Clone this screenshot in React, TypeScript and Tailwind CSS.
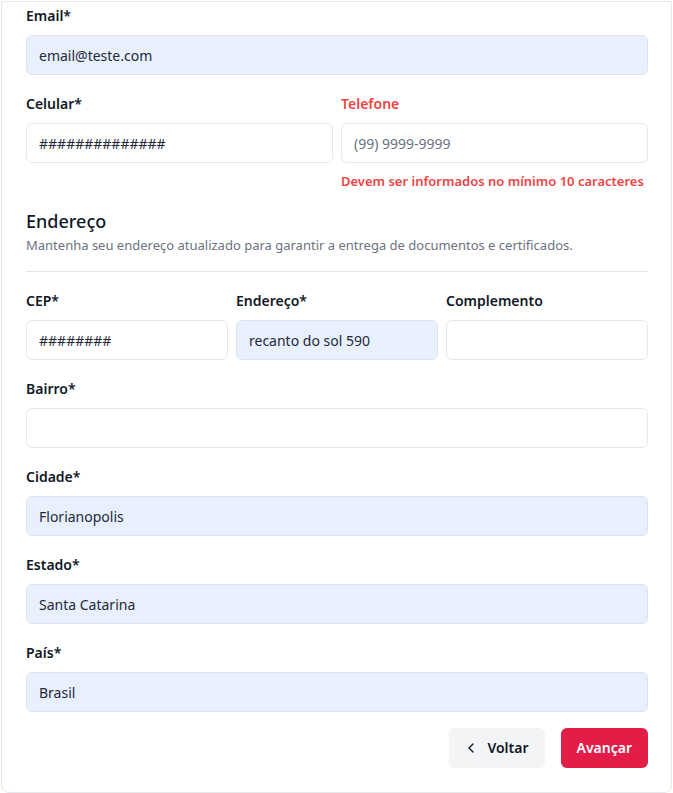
import { ChevronLeft } from 'lucide-react'

type FieldProps = {
  label: string
  value?: string
  placeholder?: string
  filled?: boolean
  error?: string
}

function Field({ label, value, placeholder, filled, error }: FieldProps) {
  return (
    <div className="flex flex-col">
      <label
        className={`mb-[9px] text-sm leading-5 font-[560] ${error ? 'text-[#ef4444]' : 'text-[#111827]'}`}
      >
        {label}
      </label>
      <input
        readOnly
        value={value ?? ''}
        placeholder={placeholder}
        className={`h-10 w-full rounded-md border px-3 text-sm text-[#1f2937] outline-none placeholder:text-[#6b7280] ${
          filled ? 'border-[#dde3ec] bg-[#e8f0fe]' : 'border-[#e5e7eb] bg-white'
        }`}
      />
      {error && (
        <p className="mt-2 text-[13px] leading-5 font-[560] text-[#ef4444]">{error}</p>
      )}
    </div>
  )
}

export default function App() {
  return (
    <div className="bg-white p-px" style={{ fontFamily: '"Noto Sans", "Open Sans", sans-serif' }}>
      <div className="rounded-b-lg border border-[#e5e7eb] pt-[4px] pr-[23px] pb-6 pl-6">
        <div className="flex flex-col gap-[19px]">
          <Field label="Email*" value="email@teste.com" filled />
          <div className="grid grid-cols-2 gap-2">
            <Field label="Celular*" value="##############" />
            <Field
              label="Telefone"
              placeholder="(99) 9999-9999"
              error="Devem ser informados no mínimo 10 caracteres"
            />
          </div>
        </div>

        <div className="mt-4">
          <h2 className="text-lg leading-7 font-medium text-[#111827]">Endereço</h2>
          <p className="text-[13px] leading-5 text-[#6b7280]">
            Mantenha seu endereço atualizado para garantir a entrega de documentos e certificados.
          </p>
          <div className="mt-4 h-px bg-[#e5e7eb]" />
        </div>

        <div className="mt-[19px] flex flex-col gap-[19px]">
          <div className="grid grid-cols-3 gap-2">
            <Field label="CEP*" value="########" />
            <Field label="Endereço*" value="recanto do sol 590" filled />
            <Field label="Complemento" />
          </div>
          <Field label="Bairro*" />
          <Field label="Cidade*" value="Florianopolis" filled />
          <Field label="Estado*" value="Santa Catarina" filled />
          <Field label="País*" value="Brasil" filled />
        </div>

        <div className="mt-4 flex justify-end gap-4">
          <button className="flex h-10 items-center gap-2 rounded-md bg-[#f3f4f6] pr-4 pl-[14px] text-sm font-[560] text-[#111827]">
            <ChevronLeft size={16} strokeWidth={2} />
            Voltar
          </button>
          <button className="h-10 rounded-md bg-[#e11d48] px-4 text-sm font-[560] text-white">
            Avançar
          </button>
        </div>
      </div>
    </div>
  )
}
